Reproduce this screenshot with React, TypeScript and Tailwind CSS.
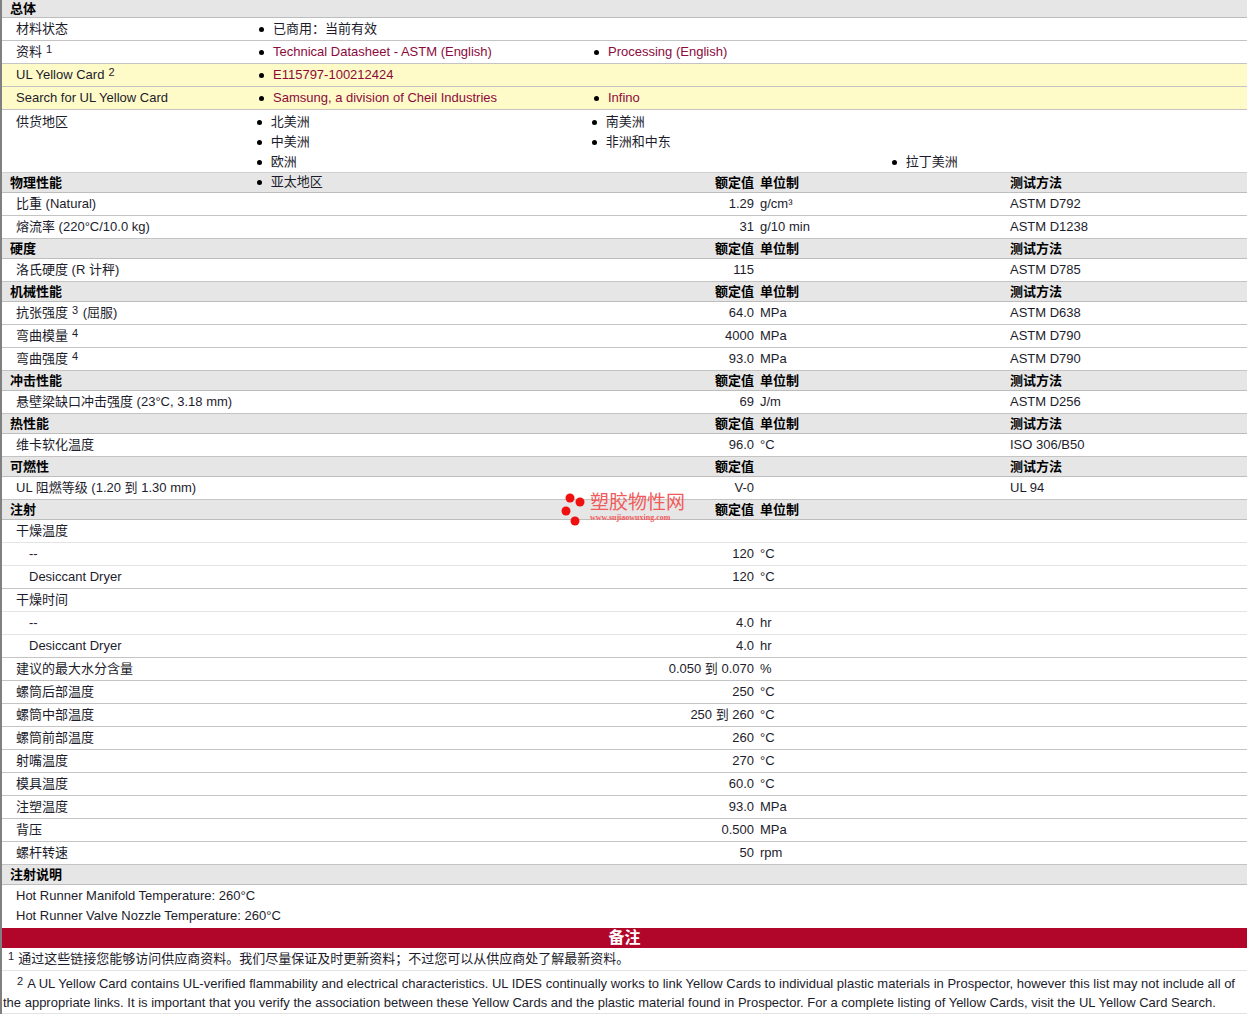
import type { ReactNode } from "react";

const font = "font-['Liberation_Sans','Noto_Sans_CJK_SC',sans-serif]";

const Sup = ({ n }: { n: number }) => (
  <sup className="relative -top-[3px] align-baseline text-[11px] leading-none ml-[4px] mr-[1px]">{n}</sup>
);

const Bullet = ({ children, link }: { children: ReactNode; link?: boolean }) => (
  <div className="flex h-[20px] w-[335px] items-center">
    <span className="ml-[1px] mr-[9px] h-[5px] w-[5px] rounded-full bg-black" />
    <span className={link ? "text-[#8c0a3c]" : ""}>{children}</span>
  </div>
);

const Head = ({ title, value, unit, test }: { title: string; value?: boolean; unit?: boolean; test?: boolean }) => (
  <div className="flex h-[20px] items-center border-b border-[#bdbdbd] bg-[#e6e6e6] pl-[8px] text-[13px] font-bold text-black">
    <div className="w-[650px]">{title}</div>
    <div className="w-[94px] text-right">{value ? "额定值" : ""}</div>
    <div className="ml-[6px] w-[250px]">{unit ? "单位制" : ""}</div>
    <div>{test ? "测试方法" : ""}</div>
  </div>
);

const Data = ({
  label,
  value,
  unit,
  test,
  indent,
  light,
}: {
  label: ReactNode;
  value?: string;
  unit?: string;
  test?: string;
  indent?: boolean;
  light?: boolean;
}) => (
  <div className={`flex h-[23px] items-center border-b ${light ? "border-[#e4e4e4]" : "border-[#c4c4c4]"}`}>
    <div className={`w-[652px] ${indent ? "pl-[27px]" : "pl-[14px]"}`}>{label}</div>
    <div className="w-[100px] text-right">{value}</div>
    <div className="ml-[6px] w-[250px]">{unit}</div>
    <div>{test}</div>
  </div>
);

const Info = ({ label, yellow, children }: { label: ReactNode; yellow?: boolean; children: ReactNode }) => (
  <div className={`flex h-[23px] items-center border-b border-[#c4c4c4] ${yellow ? "bg-[#fffbc8]" : ""}`}>
    <div className="w-[256px] pl-[14px]">{label}</div>
    {children}
  </div>
);

const Note = ({ children }: { children: ReactNode }) => (
  <div className="flex h-[23px] items-center border-b border-[#e4e4e4] pl-[2px]">{children}</div>
);

const Watermark = () => (
  <div className="absolute left-[561px] top-[492px] flex items-start gap-[5px]">
    <svg width="24" height="34" viewBox="0 0 24 34" className="mt-[1px]">
      <circle cx="9" cy="5" r="4.5" fill="#f01010" />
      <circle cx="19" cy="9" r="4.5" fill="#f01010" />
      <circle cx="5" cy="18" r="4.5" fill="#f01010" />
      <circle cx="14" cy="28" r="4.5" fill="#f01010" />
    </svg>
    <div className="-mt-[1px]">
      <div className="text-[19px] leading-[24px] text-[#f25a5a]">塑胶物性网</div>
      <div className="-mt-[2px] font-['Liberation_Serif',serif] text-[8px] font-bold leading-[9px] text-[#f25a5a]">
        www.sujiaowuxing.com
      </div>
    </div>
  </div>
);

export default function App() {
  return (
    <div className={`relative min-h-[1019px] w-[1247px] overflow-hidden bg-white text-[13px] text-[#1c1c2c] ${font}`}>
      <div className="border-l-2 border-[#808080]">
        <div className="flex h-[18px] items-center border-b border-[#bdbdbd] bg-[#e6e6e6] pl-[8px] font-bold text-black">总体</div>
        <Info label="材料状态">
          <Bullet>已商用：当前有效</Bullet>
        </Info>
        <Info label={<>资料<Sup n={1} /></>}>
          <Bullet link>Technical Datasheet - ASTM (English)</Bullet>
          <Bullet link>Processing (English)</Bullet>
        </Info>
        <Info yellow label={<>UL Yellow Card<Sup n={2} /></>}>
          <Bullet link>E115797-100212424</Bullet>
        </Info>
        <Info yellow label="Search for UL Yellow Card">
          <Bullet link>Samsung, a division of Cheil Industries</Bullet>
          <Bullet link>Infino</Bullet>
        </Info>
        <div className="flex h-[63px] border-b border-[#d0d0d0] pt-[2px]">
          <div className="w-[256px] pl-[14px] leading-[20px]">供货地区</div>
          <div className="flex w-[1000px] flex-wrap">
            <Bullet>北美洲</Bullet>
            <Bullet>南美洲</Bullet>
            <Bullet>中美洲</Bullet>
            <Bullet>非洲和中东</Bullet>
            <Bullet>欧洲</Bullet>
            <div className="w-[300px]" />
            <Bullet>拉丁美洲</Bullet>
            <Bullet>亚太地区</Bullet>
          </div>
        </div>

        <Head title="物理性能" value unit test />
        <Data label="比重  (Natural)" value="1.29" unit="g/cm³" test="ASTM D792" />
        <Data label="熔流率  (220°C/10.0 kg)" value="31" unit="g/10 min" test="ASTM D1238" />
        <Head title="硬度" value unit test />
        <Data label="洛氏硬度  (R 计秤)" value="115" test="ASTM D785" />
        <Head title="机械性能" value unit test />
        <Data label={<>抗张强度<Sup n={3} /> (屈服)</>} value="64.0" unit="MPa" test="ASTM D638" />
        <Data label={<>弯曲模量<Sup n={4} /></>} value="4000" unit="MPa" test="ASTM D790" />
        <Data label={<>弯曲强度<Sup n={4} /></>} value="93.0" unit="MPa" test="ASTM D790" />
        <Head title="冲击性能" value unit test />
        <Data label="悬壁梁缺口冲击强度  (23°C, 3.18 mm)" value="69" unit="J/m" test="ASTM D256" />
        <Head title="热性能" value unit test />
        <Data label="维卡软化温度" value="96.0" unit="°C" test="ISO 306/B50" />
        <Head title="可燃性" value test />
        <Data label="UL 阻燃等级  (1.20 到  1.30 mm)" value="V-0" test="UL 94" />
        <Head title="注射" value unit />
        <Data light label="干燥温度" />
        <Data light indent label="--" value="120" unit="°C" />
        <Data indent label="Desiccant Dryer" value="120" unit="°C" />
        <Data light label="干燥时间" />
        <Data light indent label="--" value="4.0" unit="hr" />
        <Data indent label="Desiccant Dryer" value="4.0" unit="hr" />
        <Data label="建议的最大水分含量" value="0.050 到  0.070" unit="%" />
        <Data label="螺筒后部温度" value="250" unit="°C" />
        <Data label="螺筒中部温度" value="250 到  260" unit="°C" />
        <Data label="螺筒前部温度" value="260" unit="°C" />
        <Data label="射嘴温度" value="270" unit="°C" />
        <Data label="模具温度" value="60.0" unit="°C" />
        <Data label="注塑温度" value="93.0" unit="MPa" />
        <Data label="背压" value="0.500" unit="MPa" />
        <Data label="螺杆转速" value="50" unit="rpm" />
        <Head title="注射说明" />
        <div className="h-[43px] pl-[14px] pt-[1px] leading-[20px]">
          <div>Hot Runner Manifold Temperature: 260°C</div>
          <div>Hot Runner Valve Nozzle Temperature: 260°C</div>
        </div>
        <div className="flex h-[20px] items-center justify-center bg-[#b1062a] text-[16px] font-bold text-white">备注</div>
        <Note>
          <Sup n={1} />
          <span className="ml-[3px]">通过这些链接您能够访问供应商资料。我们尽量保证及时更新资料；不过您可以从供应商处了解最新资料。</span>
        </Note>
        <div className="h-[43px] border-b border-[#e4e4e4] pt-[3px] leading-[19px] whitespace-nowrap">
          <div className="pl-[11px]">
            <Sup n={2} />
            <span className="ml-[3px]">A UL Yellow Card contains UL-verified flammability and electrical characteristics. UL IDES continually works to link Yellow Cards to individual plastic materials in Prospector, however this list may not include all of</span>
          </div>
          <div className="pl-[1px]">the appropriate links. It is important that you verify the association between these Yellow Cards and the plastic material found in Prospector. For a complete listing of Yellow Cards, visit the UL Yellow Card Search.</div>
        </div>
      </div>
      <Watermark />
    </div>
  );
}
